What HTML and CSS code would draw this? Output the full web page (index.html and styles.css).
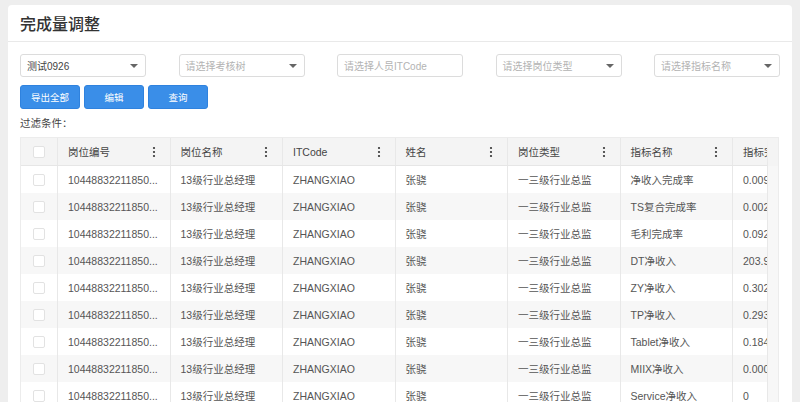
FILE: index.html
```html
<!DOCTYPE html>
<html lang="zh-CN">
<head>
<meta charset="utf-8">
<title>完成量调整</title>
<link rel="stylesheet" href="styles.css">
</head>
<body>
<div class="card">
  <div class="card-header">完成量调整</div>
  <div class="card-body">
    <div class="filters">
      <div class="select"><span class="val">测试0926</span><span class="caret"></span></div>
      <div class="select"><span class="ph">请选择考核树</span><span class="caret"></span></div>
      <div class="select"><span class="ph">请选择人员ITCode</span></div>
      <div class="select"><span class="ph">请选择岗位类型</span><span class="caret"></span></div>
      <div class="select"><span class="ph">请选择指标名称</span><span class="caret"></span></div>
    </div>
    <div class="buttons">
      <button class="btn">导出全部</button>
      <button class="btn">编辑</button>
      <button class="btn">查询</button>
    </div>
    <div class="cond">过滤条件：</div>
    <div class="grid">
      <div class="grid-main">
        <div class="row head">
          <div class="cell chk"><span class="box"></span></div>
          <div class="cell"><span>岗位编号</span><svg class="menu" width="4" height="12" viewBox="0 0 4 12"><circle cx="2" cy="2" r="1.1"/><circle cx="2" cy="6" r="1.1"/><circle cx="2" cy="10" r="1.1"/></svg></div>
          <div class="cell"><span>岗位名称</span><svg class="menu" width="4" height="12" viewBox="0 0 4 12"><circle cx="2" cy="2" r="1.1"/><circle cx="2" cy="6" r="1.1"/><circle cx="2" cy="10" r="1.1"/></svg></div>
          <div class="cell"><span>ITCode</span><svg class="menu" width="4" height="12" viewBox="0 0 4 12"><circle cx="2" cy="2" r="1.1"/><circle cx="2" cy="6" r="1.1"/><circle cx="2" cy="10" r="1.1"/></svg></div>
          <div class="cell"><span>姓名</span><svg class="menu" width="4" height="12" viewBox="0 0 4 12"><circle cx="2" cy="2" r="1.1"/><circle cx="2" cy="6" r="1.1"/><circle cx="2" cy="10" r="1.1"/></svg></div>
          <div class="cell"><span>岗位类型</span><svg class="menu" width="4" height="12" viewBox="0 0 4 12"><circle cx="2" cy="2" r="1.1"/><circle cx="2" cy="6" r="1.1"/><circle cx="2" cy="10" r="1.1"/></svg></div>
          <div class="cell"><span>指标名称</span><svg class="menu" width="4" height="12" viewBox="0 0 4 12"><circle cx="2" cy="2" r="1.1"/><circle cx="2" cy="6" r="1.1"/><circle cx="2" cy="10" r="1.1"/></svg></div>
          <div class="cell"><span>指标完成值</span></div>
        </div>
        <div class="row"><div class="cell chk"><span class="box"></span></div><div class="cell">10448832211850...</div><div class="cell">13级行业总经理</div><div class="cell">ZHANGXIAO</div><div class="cell">张骁</div><div class="cell">一三级行业总监</div><div class="cell">净收入完成率</div><div class="cell">0.00912</div></div>
        <div class="row alt"><div class="cell chk"><span class="box"></span></div><div class="cell">10448832211850...</div><div class="cell">13级行业总经理</div><div class="cell">ZHANGXIAO</div><div class="cell">张骁</div><div class="cell">一三级行业总监</div><div class="cell">TS复合完成率</div><div class="cell">0.00231</div></div>
        <div class="row"><div class="cell chk"><span class="box"></span></div><div class="cell">10448832211850...</div><div class="cell">13级行业总经理</div><div class="cell">ZHANGXIAO</div><div class="cell">张骁</div><div class="cell">一三级行业总监</div><div class="cell">毛利完成率</div><div class="cell">0.09217</div></div>
        <div class="row alt"><div class="cell chk"><span class="box"></span></div><div class="cell">10448832211850...</div><div class="cell">13级行业总经理</div><div class="cell">ZHANGXIAO</div><div class="cell">张骁</div><div class="cell">一三级行业总监</div><div class="cell">DT净收入</div><div class="cell">203.9812</div></div>
        <div class="row"><div class="cell chk"><span class="box"></span></div><div class="cell">10448832211850...</div><div class="cell">13级行业总经理</div><div class="cell">ZHANGXIAO</div><div class="cell">张骁</div><div class="cell">一三级行业总监</div><div class="cell">ZY净收入</div><div class="cell">0.30245</div></div>
        <div class="row alt"><div class="cell chk"><span class="box"></span></div><div class="cell">10448832211850...</div><div class="cell">13级行业总经理</div><div class="cell">ZHANGXIAO</div><div class="cell">张骁</div><div class="cell">一三级行业总监</div><div class="cell">TP净收入</div><div class="cell">0.29381</div></div>
        <div class="row"><div class="cell chk"><span class="box"></span></div><div class="cell">10448832211850...</div><div class="cell">13级行业总经理</div><div class="cell">ZHANGXIAO</div><div class="cell">张骁</div><div class="cell">一三级行业总监</div><div class="cell">Tablet净收入</div><div class="cell">0.18442</div></div>
        <div class="row alt"><div class="cell chk"><span class="box"></span></div><div class="cell">10448832211850...</div><div class="cell">13级行业总经理</div><div class="cell">ZHANGXIAO</div><div class="cell">张骁</div><div class="cell">一三级行业总监</div><div class="cell">MIIX净收入</div><div class="cell">0.00012</div></div>
        <div class="row"><div class="cell chk"><span class="box"></span></div><div class="cell">10448832211850...</div><div class="cell">13级行业总经理</div><div class="cell">ZHANGXIAO</div><div class="cell">张骁</div><div class="cell">一三级行业总监</div><div class="cell">Service净收入</div><div class="cell">0</div></div>
      </div>
      <div class="vscroll"></div>
    </div>
  </div>
</div>
</body>
</html>
```

FILE: styles.css
```css
* { box-sizing: border-box; }
html, body { margin: 0; padding: 0; }
body {
  background: #eeeeee;
  font-family: "Liberation Sans", "Noto Sans CJK SC", sans-serif;
  color: #555;
  height: 402px;
  overflow: hidden;
  padding: 5px 8px 0 8px;
}
.card {
  background: #fff;
  border-radius: 4px 4px 0 0;
  height: 500px;
}
.card-header {
  height: 37px;
  padding: 0 12px;
  display: flex;
  align-items: center;
  font-size: 16px;
  font-weight: 500;
  color: #333;
  border-bottom: 1px solid #e9e9e9;
}
.card-body {
  padding: 12px 13px 0 12px;
}
.filters {
  display: grid;
  grid-template-columns: repeat(5, 126px);
  column-gap: 32.5px;
}
.select {
  height: 23px;
  border: 1px solid #dcdcdc;
  border-radius: 3px;
  display: flex;
  align-items: center;
  justify-content: space-between;
  padding: 0 7px 0 6px;
  font-size: 10px;
}
.select .val { color: #444; }
.select .ph { color: #b3b3b3; }
.caret {
  width: 0;
  height: 0;
  border-left: 4px solid transparent;
  border-right: 4px solid transparent;
  border-top: 4px solid #666;
}
.buttons {
  display: flex;
  gap: 4px;
  margin-top: 8px;
}
.btn {
  width: 60px;
  height: 24px;
  border: 1px solid #2f82de;
  border-radius: 3px;
  background: #3a8ee8;
  color: #fff;
  font-family: inherit;
  font-size: 9.5px;
  padding: 0;
}
.cond {
  font-size: 10.5px;
  color: #444;
  margin-top: 8px;
  height: 13px;
  line-height: 13px;
}
.grid {
  margin-top: 7px;
  display: flex;
  width: 759px;
  border: 1px solid #ececec;
  border-bottom: none;
}
.grid-main {
  flex: 1;
  overflow: hidden;
}
.vscroll {
  width: 11px;
  background: #f7f7f7;
  border-left: 1px solid #e8e8e8;
  border-top: 28px solid #f4f4f4;
}
.row {
  display: flex;
  height: 27px;
  background: #fff;
  width: max-content;
}
.row.alt { background: #f7f7f7; }
.row.head {
  height: 28px;
  background: #f4f4f4;
  border-bottom: 1px solid #e6e6e6;
  color: #444;
}
.cell {
  width: 112.5px;
  flex: none;
  display: flex;
  align-items: center;
  justify-content: space-between;
  padding: 0 14px 0 10px;
  font-size: 10.5px;
  white-space: nowrap;
  border-right: 1px solid #e8e8e8;
}
.cell.chk {
  width: 37px;
  justify-content: center;
  padding: 0;
}
.box {
  width: 12px;
  height: 12px;
  border: 1px solid #e2e2e2;
  border-radius: 2px;
  background: #fff;
}
.menu { fill: #333; }
```
